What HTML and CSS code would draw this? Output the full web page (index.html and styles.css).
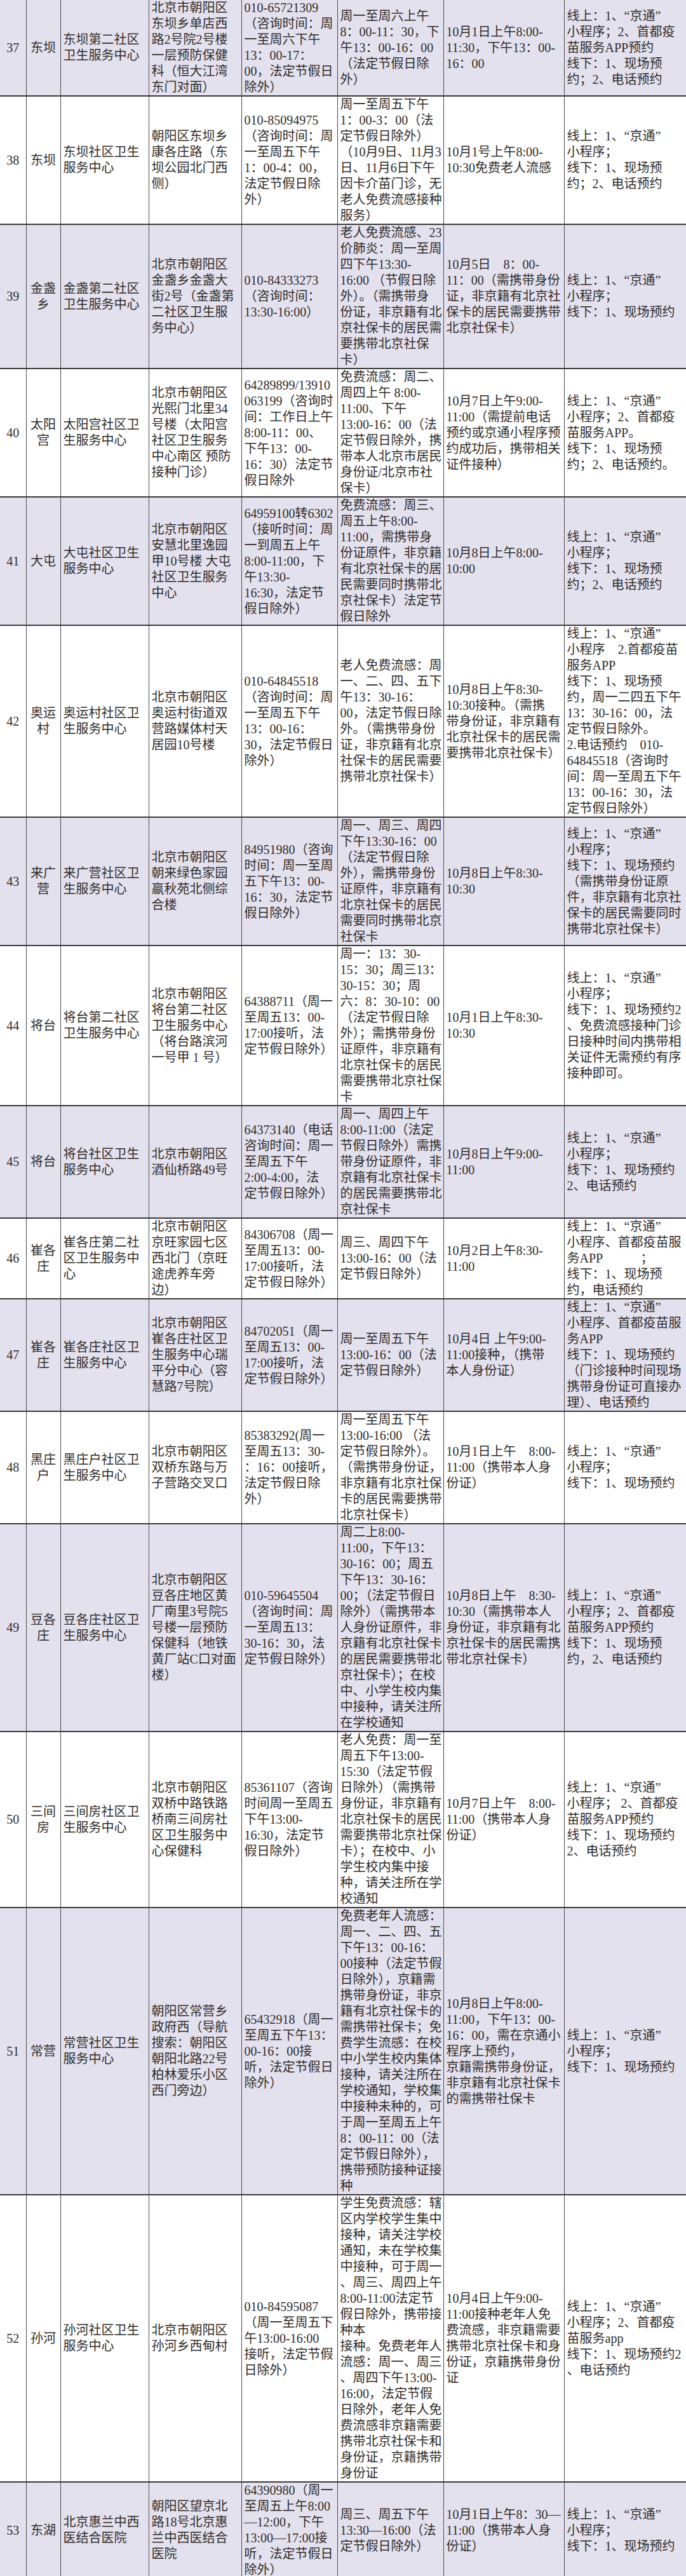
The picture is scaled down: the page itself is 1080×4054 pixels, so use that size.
FILE: index.html
```html
<!DOCTYPE html>
<html lang="zh-CN">
<head>
<meta charset="utf-8">
<title>接种点位表</title>
<link rel="stylesheet" href="styles.css">
</head>
<body>
<table class="sheet">
<colgroup>
<col class="c-no"><col class="c-area"><col class="c-name"><col class="c-addr"><col class="c-tel"><col class="c-vac"><col class="c-date"><col class="c-way">
</colgroup>
<tbody>
<tr class="alt">
<td class="no">37</td><td class="area">东坝</td>
<td>东坝第二社区<br>卫生服务中心</td>
<td>北京市朝阳区<br>东坝乡单店西<br>路2号院2号楼<br>一层预防保健<br>科（恒大江湾<br>东门对面）</td>
<td>010-65721309<br>（咨询时间：周<br>一至周六下午<br>13：00-17：<br>00，法定节假日<br>除外）</td>
<td>周一至周六上午<br>8：00-11：30，下<br>午13：00-16：00<br>（法定节假日除<br>外）</td>
<td>10月1日上午8:00-<br>11:30，下午13：00-<br>16：00</td>
<td>线上：1、“京通”<br>小程序；2、首都疫<br>苗服务APP预约<br>线下：1、现场预<br>约；2、电话预约</td>
</tr>
<tr>
<td class="no">38</td><td class="area">东坝</td>
<td>东坝社区卫生<br>服务中心</td>
<td>朝阳区东坝乡<br>康各庄路（东<br>坝公园北门西<br>侧）</td>
<td>010-85094975<br>（咨询时间：周<br>一至周五下午<br>1：00-4：00，<br>法定节假日除<br>外）</td>
<td>周一至周五下午<br>1：00-3：00（法<br>定节假日除外）<br>（10月9日、11月3<br>日、11月6日下午<br>因卡介苗门诊，无<br>老人免费流感接种<br>服务）</td>
<td>10月1号上午8:00-<br>10:30免费老人流感</td>
<td>线上：1、“京通”<br>小程序；<br>线下：1、现场预<br>约；2、电话预约</td>
</tr>
<tr class="alt">
<td class="no">39</td><td class="area">金盏<br>乡</td>
<td>金盏第二社区<br>卫生服务中心</td>
<td>北京市朝阳区<br>金盏乡金盏大<br>街2号（金盏第<br>二社区卫生服<br>务中心）</td>
<td>010-84333273<br>（咨询时间：<br>13:30-16:00）</td>
<td>老人免费流感、23<br>价肺炎：周一至周<br>四下午13:30-<br>16:00 （节假日除<br>外）。（需携带身<br>份证，非京籍有北<br>京社保卡的居民需<br>要携带北京社保<br>卡）</td>
<td>10月5日　8：00-<br>11：00（需携带身份<br>证，非京籍有北京社<br>保卡的居民需要携带<br>北京社保卡）</td>
<td>线上：1、“京通”<br>小程序；<br>线下：1、现场预约</td>
</tr>
<tr>
<td class="no">40</td><td class="area">太阳<br>宫</td>
<td>太阳宫社区卫<br>生服务中心</td>
<td>北京市朝阳区<br>光熙门北里34<br>号楼（太阳宫<br>社区卫生服务<br>中心南区 预防<br>接种门诊）</td>
<td>64289899/13910<br>063199（咨询时<br>间：工作日上午<br>8:00-11：00、<br>下午13：00-<br>16：30）法定节<br>假日除外</td>
<td>免费流感：周二、<br>周四上午 8:00-<br>11:00、下午<br>13:00-16：00（法<br>定节假日除外，携<br>带本人北京市居民<br>身份证/北京市社<br>保卡）</td>
<td>10月7日上午9:00-<br>11:00（需提前电话<br>预约或京通小程序预<br>约成功后，携带相关<br>证件接种）</td>
<td>线上：1、“京通”<br>小程序；2、首都疫<br>苗服务APP。<br>线下：1、现场预<br>约；2、电话预约。</td>
</tr>
<tr class="alt">
<td class="no">41</td><td class="area">大屯</td>
<td>大屯社区卫生<br>服务中心</td>
<td>北京市朝阳区<br>安慧北里逸园<br>甲10号楼 大屯<br>社区卫生服务<br>中心</td>
<td>64959100转6302<br>（接听时间：周<br>一到周五上午<br>8:00-11:00，下<br>午13:30-<br>16:30，法定节<br>假日除外）</td>
<td>免费流感：周三、<br>周五上午8:00-<br>11:00，需携带身<br>份证原件，非京籍<br>有北京社保卡的居<br>民需要同时携带北<br>京社保卡）法定节<br>假日除外</td>
<td>10月8日上午8:00-<br>10:00</td>
<td>线上：1、“京通”<br>小程序；<br>线下：1、现场预<br>约；2、电话预约</td>
</tr>
<tr>
<td class="no">42</td><td class="area">奥运<br>村</td>
<td>奥运村社区卫<br>生服务中心</td>
<td>北京市朝阳区<br>奥运村街道双<br>营路媒体村天<br>居园10号楼</td>
<td>010-64845518<br>（咨询时间：周<br>一至周五下午<br>13：00-16：<br>30，法定节假日<br>除外）</td>
<td>老人免费流感：周<br>一、二、四、五下<br>午13：30-16：<br>00，法定节假日除<br>外。（需携带身份<br>证，非京籍有北京<br>社保卡的居民需要<br>携带北京社保卡）</td>
<td>10月8日上午8:30-<br>10:30接种。（需携<br>带身份证，非京籍有<br>北京社保卡的居民需<br>要携带北京社保卡）</td>
<td>线上：1、“京通”<br>小程序　2.首都疫苗<br>服务APP<br>线下：1、现场预<br>约，周一二四五下午<br>13：30-16：00，法<br>定节假日除外。<br>2.电话预约　010-<br>64845518（咨询时<br>间：周一至周五下午<br>13：00-16：30，法<br>定节假日除外）</td>
</tr>
<tr class="alt">
<td class="no">43</td><td class="area">来广<br>营</td>
<td>来广营社区卫<br>生服务中心</td>
<td>北京市朝阳区<br>朝来绿色家园<br>嬴秋苑北侧综<br>合楼</td>
<td>84951980（咨询<br>时间：周一至周<br>五下午13：00-<br>16：30，法定节<br>假日除外）</td>
<td>周一、周三、周四<br>下午13:30-16：00<br>（法定节假日除<br>外），需携带身份<br>证原件，非京籍有<br>北京社保卡的居民<br>需要同时携带北京<br>社保卡</td>
<td>10月8日上午8:30-<br>10:30</td>
<td>线上：1、“京通”<br>小程序；<br>线下：1、现场预约<br>（需携带身份证原<br>件，非京籍有北京社<br>保卡的居民需要同时<br>携带北京社保卡）</td>
</tr>
<tr>
<td class="no">44</td><td class="area">将台</td>
<td>将台第二社区<br>卫生服务中心</td>
<td>北京市朝阳区<br>将台第二社区<br>卫生服务中心<br>（将台路滨河<br>一号甲 1 号）</td>
<td>64388711（周一<br>至周五13：00-<br>17:00接听，法<br>定节假日除外）</td>
<td>周一：13：30-<br>15：30；周三13：<br>30-15：30；周<br>六：8：30-10：00<br>（法定节假日除<br>外）；需携带身份<br>证原件，非京籍有<br>北京社保卡的居民<br>需要携带北京社保<br>卡</td>
<td>10月1日上午8:30-<br>10:30</td>
<td>线上：1、“京通”<br>小程序；<br>线下：1、现场预约2<br>、免费流感接种门诊<br>日接种时间内携带相<br>关证件无需预约有序<br>接种即可。</td>
</tr>
<tr class="alt">
<td class="no">45</td><td class="area">将台</td>
<td>将台社区卫生<br>服务中心</td>
<td>北京市朝阳区<br>酒仙桥路49号</td>
<td>64373140（电话<br>咨询时间：周一<br>至周五下午<br>2:00-4:00，法<br>定节假日除外）</td>
<td>周一、周四上午<br>8:00-11:00（法定<br>节假日除外）需携<br>带身份证原件，非<br>京籍有北京社保卡<br>的居民需要携带北<br>京社保卡</td>
<td>10月8日上午9:00-<br>11:00</td>
<td>线上：1、“京通”<br>小程序；<br>线下：1、现场预约<br>2、电话预约</td>
</tr>
<tr>
<td class="no">46</td><td class="area">崔各<br>庄</td>
<td>崔各庄第二社<br>区卫生服务中<br>心</td>
<td>北京市朝阳区<br>京旺家园七区<br>西北门（京旺<br>途虎养车旁<br>边）</td>
<td>84306708（周一<br>至周五13：00-<br>17:00接听，法<br>定节假日除外）</td>
<td>周三、周四下午<br>13:00-16：00（法<br>定节假日除外）</td>
<td>10月2日上午8:30-<br>11:00</td>
<td>线上：1、“京通”<br>小程序、首都疫苗服<br>务APP　　　；<br>线下：1、现场预<br>约，电话预约</td>
</tr>
<tr class="alt">
<td class="no">47</td><td class="area">崔各<br>庄</td>
<td>崔各庄社区卫<br>生服务中心</td>
<td>北京市朝阳区<br>崔各庄社区卫<br>生服务中心瑞<br>平分中心（容<br>慧路7号院）</td>
<td>84702051（周一<br>至周五13：00-<br>17:00接听，法<br>定节假日除外）</td>
<td>周一至周五下午<br>13:00-16：00（法<br>定节假日除外）</td>
<td>10月4日 上午9:00-<br>11:00接种，（携带<br>本人身份证）</td>
<td>线上：1、“京通”<br>小程序、首都疫苗服<br>务APP<br>线下：1、现场预约<br>（门诊接种时间现场<br>携带身份证可直接办<br>理）、电话预约</td>
</tr>
<tr>
<td class="no">48</td><td class="area">黑庄<br>户</td>
<td>黑庄户社区卫<br>生服务中心</td>
<td>北京市朝阳区<br>双桥东路与万<br>子营路交叉口</td>
<td>85383292(周一<br>至周五13：30-<br>：16：00接听，<br>法定节假日除<br>外）</td>
<td>周一至周五下午<br>13:00-16:00 （法<br>定节假日除外）。<br>（需携带身份证，<br>非京籍有北京社保<br>卡的居民需要携带<br>北京社保卡）</td>
<td>10月1日上午　8:00-<br>11:00（携带本人身<br>份证）</td>
<td>线上：1、“京通”<br>小程序；<br>线下：1、现场预约</td>
</tr>
<tr class="alt">
<td class="no">49</td><td class="area">豆各<br>庄</td>
<td>豆各庄社区卫<br>生服务中心</td>
<td>北京市朝阳区<br>豆各庄地区黄<br>厂南里3号院5<br>号楼一层预防<br>保健科（地铁<br>黄厂站C口对面<br>楼）</td>
<td>010-59645504<br>（咨询时间：周<br>一至周五13：<br>30-16：30，法<br>定节假日除外）</td>
<td>周二上8:00-<br>11:00，下午13：<br>30-16：00；周五<br>下午13：30-16：<br>00；（法定节假日<br>除外）（需携带本<br>人身份证原件，非<br>京籍有北京社保卡<br>的居民需要携带北<br>京社保卡）；在校<br>中、小学生校内集<br>中接种，请关注所<br>在学校通知</td>
<td>10月8日上午　8:30-<br>10:30（需携带本人<br>身份证，非京籍有北<br>京社保卡的居民需携<br>带北京社保卡）</td>
<td>线上：1、“京通”<br>小程序；2、首都疫<br>苗服务APP预约<br>线下：1、现场预<br>约，2、电话预约</td>
</tr>
<tr>
<td class="no">50</td><td class="area">三间<br>房</td>
<td>三间房社区卫<br>生服务中心</td>
<td>北京市朝阳区<br>双桥中路铁路<br>桥南三间房社<br>区卫生服务中<br>心保健科</td>
<td>85361107（咨询<br>时间周一至周五<br>下午13:00-<br>16:30，法定节<br>假日除外）</td>
<td>老人免费：周一至<br>周五下午13:00-<br>15:30（法定节假<br>日除外）（需携带<br>身份证，非京籍有<br>北京社保卡的居民<br>需要携带北京社保<br>卡）；在校中、小<br>学生校内集中接<br>种，请关注所在学<br>校通知</td>
<td>10月7日上午　8:00-<br>11:00（携带本人身<br>份证）</td>
<td>线上：1、“京通”<br>小程序； 2、首都疫<br>苗服务APP预约<br>线下：1、现场预约<br>2、电话预约</td>
</tr>
<tr class="alt">
<td class="no">51</td><td class="area">常营</td>
<td>常营社区卫生<br>服务中心</td>
<td>朝阳区常营乡<br>政府西（导航<br>搜索：朝阳区<br>朝阳北路22号<br>柏林爱乐小区<br>西门旁边）</td>
<td>65432918（周一<br>至周五下午13：<br>00-16：00接<br>听，法定节假日<br>除外）</td>
<td>免费老年人流感：<br>周一、二、四、五<br>下午13：00-16：<br>00接种（法定节假<br>日除外），京籍需<br>携带身份证，非京<br>籍有北京社保卡的<br>需携带社保卡；免<br>费学生流感：在校<br>中小学生校内集体<br>接种，请关注所在<br>学校通知，学校集<br>中接种未种的，可<br>于周一至周五上午<br>8：00-11：00（法<br>定节假日除外），<br>携带预防接种证接<br>种</td>
<td>10月8日上午8:00-<br>11:00，下午13：00-<br>16：00，需在京通小<br>程序上预约，<br>京籍需携带身份证，<br>非京籍有北京社保卡<br>的需携带社保卡</td>
<td>线上：1、“京通”<br>小程序；<br>线下：1、现场预约</td>
</tr>
<tr>
<td class="no">52</td><td class="area">孙河</td>
<td>孙河社区卫生<br>服务中心</td>
<td>北京市朝阳区<br>孙河乡西甸村</td>
<td>010-84595087<br>（周一至周五下<br>午13:00-16:00<br>接听，法定节假<br>日除外）</td>
<td>学生免费流感：辖<br>区内学校学生集中<br>接种，请关注学校<br>通知，未在学校集<br>中接种，可于周一<br>、周三、周四上午<br>8:00-11:00法定节<br>假日除外，携带接<br>种本<br>接种。免费老年人<br>流感：周一、周三<br>、周四下午13:00-<br>16:00，法定节假<br>日除外，老年人免<br>费流感非京籍需要<br>携带北京社保卡和<br>身份证，京籍携带<br>身份证</td>
<td>10月4日上午9:00-<br>11:00接种老年人免<br>费流感，非京籍需要<br>携带北京社保卡和身<br>份证，京籍携带身份<br>证</td>
<td>线上：1、“京通”<br>小程序；2、首都疫<br>苗服务app<br>线下：1、现场预约2<br>、电话预约</td>
</tr>
<tr class="alt">
<td class="no">53</td><td class="area">东湖</td>
<td>北京惠兰中西<br>医结合医院</td>
<td>朝阳区望京北<br>路18号北京惠<br>兰中西医结合<br>医院</td>
<td>64390980（周一<br>至周五上午8:00<br>—12:00，下午<br>13:00—17:00接<br>听，法定节假日<br>除外）</td>
<td>周三、周五下午<br>13:30—16:00（法<br>定节假日除外）</td>
<td>10月1日上午8：30—<br>11:00（携带本人身<br>份证）</td>
<td>线上：1、“京通”<br>小程序；<br>线下：1、现场预约</td>
</tr>
</tbody>
</table>
</body>
</html>
```

FILE: styles.css
```css
html, body {
  margin: 0;
  padding: 0;
  background: #ffffff;
}

.sheet {
  width: 1080px;
  border-collapse: collapse;
  table-layout: fixed;
  font-family: "Liberation Serif", "Noto Sans CJK SC", serif;
  font-size: 20px;
  line-height: 25px;
  color: #2f2d2b;
}

.c-no { width: 41px; }
.c-area { width: 54px; }
.c-name { width: 139px; }
.c-addr { width: 146px; }
.c-tel { width: 151px; }
.c-vac { width: 167px; }
.c-date { width: 190px; }
.c-way { width: 192px; }

.sheet tr {
  border-bottom: 2px solid #3a3a3a;
}

.sheet tr.alt {
  background: #e4e1ee;
}

.sheet td {
  padding: 0 0 0 4px;
  vertical-align: middle;
  text-align: left;
  white-space: nowrap;
  overflow: hidden;
  border-left: 1px solid #4a4a4a;
}

.sheet td:first-child {
  border-left: none;
}

.sheet td.no,
.sheet td.area {
  padding: 0;
  text-align: center;
}
```
